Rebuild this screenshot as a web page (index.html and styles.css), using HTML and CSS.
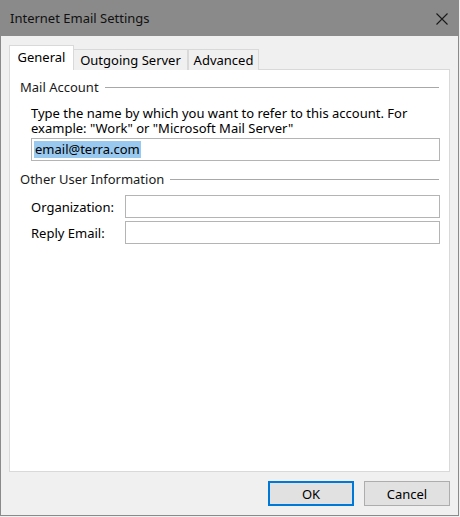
FILE: index.html
```html
<!DOCTYPE html>
<html>
<head>
<meta charset="utf-8">
<link rel="stylesheet" href="styles.css">
</head>
<body>
<div class="window">
  <div class="titlebar">
    <span class="title">Internet Email Settings</span>
    <svg class="close" width="12" height="12" viewBox="0 0 12 12"><path d="M0.5 0.5 L11.5 11.5 M11.5 0.5 L0.5 11.5" stroke="#1a1a1a" stroke-width="1.1" fill="none"/></svg>
  </div>
  <div class="client">
    <div class="tabs">
      <div class="tab selected tab-general">General</div>
      <div class="tab tab-outgoing">Outgoing Server</div>
      <div class="tab tab-advanced">Advanced</div>
    </div>
    <div class="panel">
      <div class="group-head"><span>Mail Account</span><div class="rule"></div></div>
      <p class="desc">Type the name by which you want to refer to this account. For example: "Work" or "Microsoft Mail Server"</p>
      <div class="textbox wide"><span class="sel">email@terra.com</span></div>
      <div class="group-head second"><span>Other User Information</span><div class="rule"></div></div>
      <div class="field-row first">
        <span class="field-label">Organization:</span>
        <div class="textbox field"></div>
      </div>
      <div class="field-row">
        <span class="field-label">Reply Email:</span>
        <div class="textbox field"></div>
      </div>
    </div>
    <div class="buttons">
      <div class="btn default">OK</div>
      <div class="btn">Cancel</div>
    </div>
  </div>
</div>
</body>
</html>
```

FILE: styles.css
```css
html, body {
  margin: 0;
  padding: 0;
}
body {
  width: 460px;
  height: 517px;
  font-family: "Segoe UI", "Noto Sans", sans-serif;
  font-size: 13px;
  color: #000;
  background: #f0f0f0;
}
.window {
  box-sizing: border-box;
  width: 459px;
  height: 516px;
  border: 1px solid #8a8a8a;
  border-top: none;
  display: flex;
  flex-direction: column;
  background: #f0f0f0;
}
.titlebar {
  height: 36px;
  flex: none;
  background: #8a8a8a;
  display: flex;
  align-items: center;
  justify-content: space-between;
  padding: 0 11px 0 10px;
  margin: 0 -1px;
}
.title {
  font-size: 13px;
  color: #111;
}
.close {
  margin-top: 1px;
}
.client {
  flex: 1;
  display: flex;
  flex-direction: column;
  padding: 9px 0 0 8px;
}
.tabs {
  display: flex;
  align-items: flex-end;
  height: 24px;
  position: relative;
  z-index: 1;
}
.tab {
  box-sizing: border-box;
  height: 21px;
  border: 1px solid #d9d9d9;
  border-bottom: none;
  background: #f0f0f0;
  display: flex;
  align-items: center;
  justify-content: center;
  margin-bottom: -1px;
  padding-top: 0;
}
.tab.selected {
  height: 25px;
  background: #fff;
  padding-top: 0;
  padding-bottom: 2px;
}
.tab-general { width: 65px; }
.tab-outgoing { width: 114px; border-left: none; }
.tab-advanced { width: 71px; }
.panel {
  box-sizing: border-box;
  width: 441px;
  height: 403px;
  background: #fff;
  border: 1px solid #d9d9d9;
  padding: 10px 10px 0 10px;
}
.group-head {
  display: flex;
  align-items: center;
  height: 15px;
  line-height: 15px;
  color: #1a1a1a;
}
.group-head.second {
  margin-top: 11px;
}
.rule {
  flex: 1;
  height: 1px;
  background: #a8a8a8;
  margin-left: 6px;
}
.desc {
  margin: 11px 0 0 11px;
  line-height: 15px;
  width: 410px;
}
.textbox {
  box-sizing: border-box;
  height: 23px;
  border: 1px solid #b4b4b4;
  background: #fff;
}
.wide {
  margin: 2px -1px 0 11px;
  padding: 2px 0 0 2px;
  line-height: 17px;
}
.sel {
  background: #99c9ef;
  display: inline-block;
  padding: 0 1px;
}
.field-row {
  display: flex;
  align-items: center;
  margin: 3px -1px 0 11px;
}
.field-row.first {
  margin-top: 8px;
}
.field-label {
  width: 94px;
  flex: none;
}
.field {
  flex: 1;
}
.buttons {
  display: flex;
  justify-content: flex-end;
  gap: 10px;
  margin-top: 9px;
  padding-right: 8px;
}
.btn {
  box-sizing: border-box;
  width: 86px;
  height: 25px;
  border: 1px solid #adadad;
  background: #e1e1e1;
  display: flex;
  align-items: center;
  justify-content: center;
}
.btn.default {
  border: 2px solid #0078d7;
}
```
